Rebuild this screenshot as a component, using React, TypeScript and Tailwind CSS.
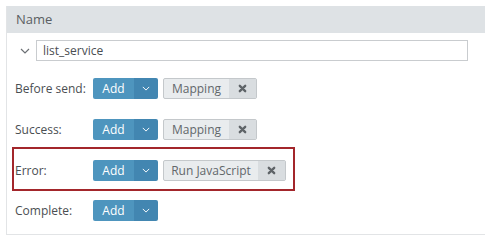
import { ReactNode } from 'react';

function Chevron({ className }: { className?: string }) {
  return (
    <svg viewBox="0 0 10 6" className={className} fill="none" stroke="currentColor" strokeWidth="1.2">
      <path d="M1 1l4 4 4-4" />
    </svg>
  );
}

function Cross() {
  return (
    <svg viewBox="0 0 10 10" className="w-[9px] h-[9px] text-[#5f6468]" fill="none" stroke="currentColor" strokeWidth="2.6" strokeLinecap="round">
      <path d="M2 2l6 6M8 2l-6 6" />
    </svg>
  );
}

function AddButton() {
  return (
    <div className="flex h-[21px] w-[65px] rounded-[2px] overflow-hidden text-white text-[12px]">
      <div className="w-[41px] bg-[#4e95be] flex items-center justify-center">Add</div>
      <div className="w-[24px] bg-[#4286b1] flex items-center justify-center">
        <Chevron className="w-[8px] h-[5px]" />
      </div>
    </div>
  );
}

function Chip({ label, width }: { label: string; width: string }) {
  return (
    <div className={`flex h-[21px] ${width} ml-[5px] rounded-[2px] border border-[#c4c8cb] bg-[#e9ecee] text-[#62676b] text-[12px] overflow-hidden`}>
      <div className="flex-1 flex items-center justify-center">{label}</div>
      <div className="w-[27px] bg-[#d9dde0] flex items-center justify-center">
        <Cross />
      </div>
    </div>
  );
}

function Row({ label, children }: { label: string; children?: ReactNode }) {
  return (
    <div className="flex items-center h-[21px]">
      <div className="w-[78px] text-[12px] text-[#4a4e52]">{label}</div>
      <AddButton />
      {children}
    </div>
  );
}

export default function App() {
  return (
    <div className="w-[485px] h-[249px] bg-white pt-[6px] pl-[6px]" style={{ fontFamily: '"Open Sans", sans-serif' }}>
      <div className="h-[229px] border-l border-b border-[#e2e4e6]">
        {/* Header */}
        <div className="h-[27px] bg-[#dee2e5] flex items-center pl-[9px] text-[13px] text-[#5a5e62]">Name</div>

        {/* Name input */}
        <div className="flex items-center mt-[7px] pl-[13px]">
          <Chevron className="w-[10px] h-[6px] text-[#6c7074]" />
          <div className="ml-[6px] w-[432px] h-[21px] border border-[#c9cccf] flex items-center pl-[6px] text-[12px] text-[#4a4e52]">
            list_service
          </div>
        </div>

        {/* Event handlers */}
        <div className="pl-[8px]">
          <div className="mt-[17px]">
            <Row label="Before send:">
              <Chip label="Mapping" width="w-[94px]" />
            </Row>
          </div>
          <div className="mt-[20px]">
            <Row label="Success:">
              <Chip label="Mapping" width="w-[94px]" />
            </Row>
          </div>
          <div className="mt-[7px] -ml-[3px] w-[283px] border-2 border-[#a3262b] pt-[11px] pb-[8px] pl-[1px]">
            <Row label="Error:">
              <Chip label="Run JavaScript" width="w-[123px]" />
            </Row>
          </div>
          <div className="mt-[9px]">
            <Row label="Complete:" />
          </div>
        </div>
      </div>
    </div>
  );
}
